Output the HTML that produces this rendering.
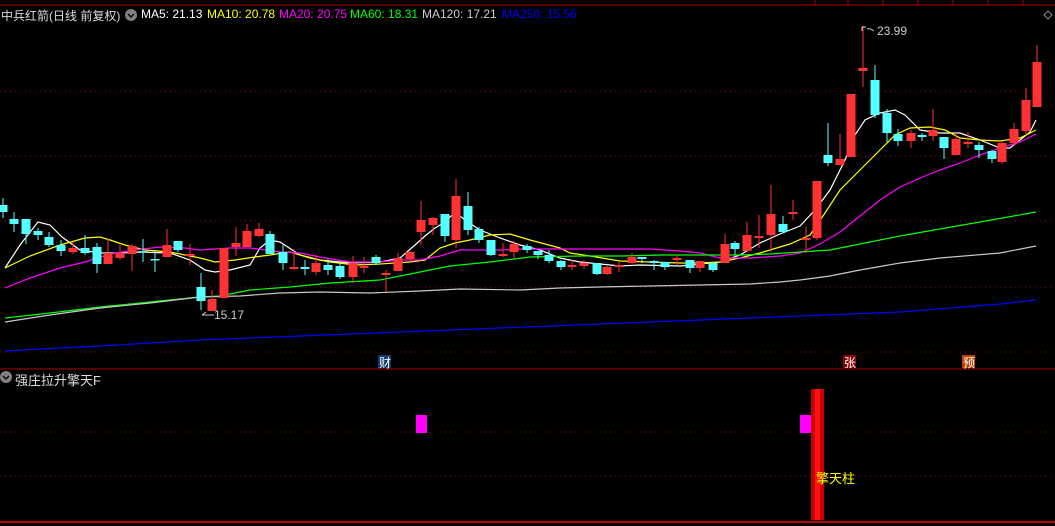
<!DOCTYPE html>
<html><head><meta charset="utf-8"><style>
html,body{margin:0;padding:0;background:#000;width:1055px;height:526px;overflow:hidden;font-family:"Liberation Sans","Noto Sans CJK SC",sans-serif}
svg{position:absolute;left:0;top:0}
.t{position:absolute;font-size:12px;white-space:nowrap}
</style></head><body>
<svg id="s" width="1055" height="526" xmlns="http://www.w3.org/2000/svg">
<line x1="0" y1="5" x2="1055" y2="5" stroke="#b00000"/>
<g stroke="#b00000">
<line x1="815" y1="0" x2="815" y2="5"/><line x1="848" y1="0" x2="848" y2="5"/><line x1="883" y1="0" x2="883" y2="5"/><line x1="918" y1="0" x2="918" y2="5"/><line x1="953" y1="0" x2="953" y2="5"/><line x1="988" y1="0" x2="988" y2="5"/><line x1="1023" y1="0" x2="1023" y2="5"/>
</g>
<g stroke="#a00000" stroke-dasharray="1 4">
<line x1="0" y1="91" x2="1055" y2="91"/><line x1="0" y1="156" x2="1055" y2="156"/><line x1="0" y1="221" x2="1055" y2="221"/><line x1="0" y1="287" x2="1055" y2="287"/><line x1="0" y1="352" x2="1055" y2="352"/>
<line x1="0" y1="432" x2="1055" y2="432"/><line x1="0" y1="476" x2="1055" y2="476"/>
</g>
<line x1="0" y1="369" x2="1055" y2="369" stroke="#b00000"/>
<line x1="0" y1="522" x2="1055" y2="522" stroke="#c00000" stroke-width="2"/>
<g id="ma" fill="none" stroke-width="1.2"></g>
<g id="c"></g>
<rect x="416" y="415" width="11" height="18" fill="#ff00ff"/>
<rect x="800" y="415" width="11" height="18" fill="#ff00ff"/>
<rect x="811" y="389" width="13" height="131" fill="#c80000"/>
<rect x="815" y="389" width="5" height="131" fill="#ff1010"/>
<rect x="378" y="355" width="13" height="13" fill="#123a6a"/>
<rect x="843" y="355" width="13" height="13" fill="#8a0000"/>
<rect x="962" y="355" width="13" height="13" fill="#c04000"/>
<circle cx="131" cy="15" r="6" fill="#808080"/><path d="M128 14 L131 17 L134 14" stroke="#000" fill="none" stroke-width="1.3"/>
<circle cx="6" cy="377" r="6" fill="#808080"/><path d="M3 376 L6 379 L9 376" stroke="#000" fill="none" stroke-width="1.3"/>
<path d="M1048 11 L1052 15 L1048 19 L1044 15Z" stroke="#888" fill="none"/>
<path d="M862 31 L862 27 L866 27 M867 29 Q870 28 874 31" stroke="#ccc" fill="none"/>
<path d="M202 315 L206 312 M202 315 L214 315" stroke="#ccc" fill="none"/>
</svg>
<div class="t" style="left:1px;top:7px;color:#ddd">中兵红箭(日线 前复权)</div>
<div class="t" style="left:141px;top:7px;color:#fff">MA5: 21.13</div>
<div class="t" style="left:207px;top:7px;color:#ffff00">MA10: 20.78</div>
<div class="t" style="left:279px;top:7px;color:#ff00ff">MA20: 20.75</div>
<div class="t" style="left:350px;top:7px;color:#00ff00">MA60: 18.31</div>
<div class="t" style="left:422px;top:7px;color:#ccc">MA120: 17.21</div>
<div class="t" style="left:502px;top:7px;color:#0000ff">MA250: 15.56</div>
<div class="t" style="left:877px;top:24px;color:#ccc">23.99</div>
<div class="t" style="left:214px;top:308px;color:#ccc">15.17</div>
<div class="t" style="left:379px;top:354px;color:#fff;font-size:12px">财</div>
<div class="t" style="left:844px;top:354px;color:#fff;font-size:12px">张</div>
<div class="t" style="left:963px;top:354px;color:#fff;font-size:12px">预</div>
<div class="t" style="left:15px;top:370px;color:#ddd;font-size:13px">强庄拉升擎天F</div>
<div class="t" style="left:816px;top:468px;color:#ffff00;font-size:13px">擎天柱</div>
<script>
var C=[
[3,205,212,198,218,'c'],[14,219,224,212,232,'c'],[26,219,234,220,244,'c'],[38,231,235,228,240,'c'],[49,237,245,232,247,'c'],[61,245,251,240,256,'c'],[73,248,252,242,254,'r'],[85,248,253,235,255,'c'],[97,247,264,243,273,'c'],[108,253,264,239,264,'r'],[120,253,258,245,260,'r'],[132,246,254,244,271,'r'],[143,251,252,239,262,'c'],[155,259,260,251,272,'c'],[167,245,257,229,257,'r'],[178,241,250,241,252,'c'],[190,254,256,244,265,'r'],[201,287,301,273,310,'c'],[212,299,311,290,311,'r'],[224,248,298,248,298,'r'],[236,243,247,227,256,'r'],[247,231,247,224,247,'r'],[259,229,236,223,237,'r'],[270,234,254,231,254,'c'],[283,252,263,245,270,'c'],[294,267,269,249,270,'r'],[305,267,269,260,275,'c'],[316,263,272,255,275,'r'],[328,265,270,259,275,'c'],[340,266,277,262,279,'c'],
[353,263,277,256,283,'r'],[364,266,268,257,273,'r'],[376,257,263,255,265,'c'],[386,273,275,270,292,'r'],[398,258,271,253,271,'r'],[410,252,259,251,262,'r'],[421,220,232,201,245,'r'],[433,218,225,217,235,'r'],[445,214,236,214,242,'c'],[456,196,240,179,248,'r'],[468,206,230,192,235,'c'],[479,229,240,227,243,'c'],[491,240,255,240,256,'c'],[503,254,256,243,257,'r'],[514,244,252,241,259,'r'],[527,246,250,244,253,'c'],[538,251,255,251,259,'c'],[549,255,261,250,263,'c'],[561,261,267,260,270,'c'],[572,265,267,260,270,'r'],[584,263,266,260,269,'r'],[597,263,274,263,275,'c'],[607,267,274,266,275,'r'],[619,265,267,262,272,'r'],[632,257,263,253,264,'r'],[642,257,259,257,263,'c'],[654,261,263,260,270,'c'],[665,262,267,262,270,'c'],[677,258,260,255,265,'r'],[690,260,268,260,273,'c'],[700,261,268,262,272,'r'],[713,263,270,262,272,'c'],
[725,244,263,234,263,'r'],[735,243,249,241,255,'c'],[747,235,251,222,252,'r'],[759,236,238,215,248,'r'],[771,214,235,185,252,'r'],[783,224,232,216,233,'c'],[793,212,214,200,220,'r'],[806,238,240,227,253,'r'],[817,181,238,181,240,'r'],[828,155,163,123,166,'c'],[840,159,165,134,165,'r'],[851,94,157,94,157,'r'],[863,68,71,26,87,'r'],[875,80,115,65,118,'c'],[887,113,133,109,142,'c'],[898,134,141,129,146,'c'],[911,133,141,130,148,'r'],[922,135,137,133,141,'c'],[933,130,136,109,141,'r'],[944,137,148,137,159,'c'],[956,139,155,132,155,'r'],[968,142,144,132,148,'r'],[979,145,150,142,158,'c'],[992,151,159,150,163,'c'],[1002,143,162,141,164,'r'],[1014,129,143,123,146,'r'],[1026,100,131,88,135,'r'],[1037,62,107,45,107,'r']];
var ns='http://www.w3.org/2000/svg',g=document.getElementById('c'),h='';
C.forEach(function(k){var col=k[5]=='r'?'#ff3333':'#55ffff';
h+='<line x1="'+k[0]+'" y1="'+k[3]+'" x2="'+k[0]+'" y2="'+k[4]+'" stroke="'+col+'"/>';
var ht=Math.max(k[2]-k[1],1.5);h+='<rect x="'+(k[0]-4.5)+'" y="'+k[1]+'" width="9" height="'+ht+'" fill="'+col+'"/>';});
g.innerHTML=h;
var M=[
['#ffffff','5,268 20,245 38,222 50,225 62,237 80,250 100,253 120,253 140,252 170,253 190,260 205,270 215,272 230,270 250,265 260,248 270,240 280,242 300,255 320,260 350,263 380,262 400,258 415,245 425,236 435,228 445,222 455,212 465,220 480,230 500,238 520,245 540,250 560,258 580,262 600,264 620,266 640,265 680,266 720,262 740,255 760,243 780,234 800,226 815,210 830,190 845,160 855,135 865,120 880,113 895,110 905,115 920,130 940,133 960,133 980,140 1000,148 1010,148 1020,140 1030,132 1036,120'],
['#ffff00','5,268 30,256 60,245 85,238 100,237 110,240 125,245 145,250 170,252 200,258 215,262 235,260 255,257 270,255 290,252 310,258 330,262 355,265 380,264 410,262 425,260 440,248 455,243 470,240 490,235 510,234 530,240 560,248 570,253 590,256 620,261 650,262 680,263 700,263 720,262 740,258 760,253 790,244 810,235 825,213 840,190 860,170 880,150 895,135 910,128 930,127 945,130 960,138 980,140 1000,141 1020,138 1036,130'],
['#ff00ff','5,288 30,278 60,268 85,262 110,254 135,250 160,247 185,248 200,250 230,248 250,248 280,252 300,253 320,257 350,262 380,262 400,260 420,260 440,256 460,250 500,250 520,249 560,249 600,249 650,249 680,251 700,253 720,258 750,258 780,256 800,253 820,244 840,232 860,216 880,200 900,187 920,178 940,170 960,163 980,155 1000,148 1020,142 1036,134'],
['#00ff00','5,318 50,313 100,307 150,302 200,297 220,296 250,290 290,287 330,283 380,280 420,272 450,266 490,262 530,257 580,256 620,256 660,255 700,255 740,255 770,254 800,252 830,250 860,244 900,236 940,229 980,222 1036,212'],
['#c8c8c8','5,322 50,315 100,308 150,303 200,297 240,296 280,293 320,292 370,293 420,291 460,289 520,290 560,288 600,287 650,286 700,285 750,284 780,282 800,280 830,276 860,270 900,263 940,258 1000,253 1036,246'],
['#0000ff','5,351 40,349 100,346 200,340 300,336 400,332 500,328 600,324 700,320 800,316 900,312 1000,304 1036,300']];
var mh='';M.forEach(function(m){mh+='<polyline points="'+m[1]+'" stroke="'+m[0]+'"/>';});
document.getElementById('ma').innerHTML=mh;
</script>
</body></html>
